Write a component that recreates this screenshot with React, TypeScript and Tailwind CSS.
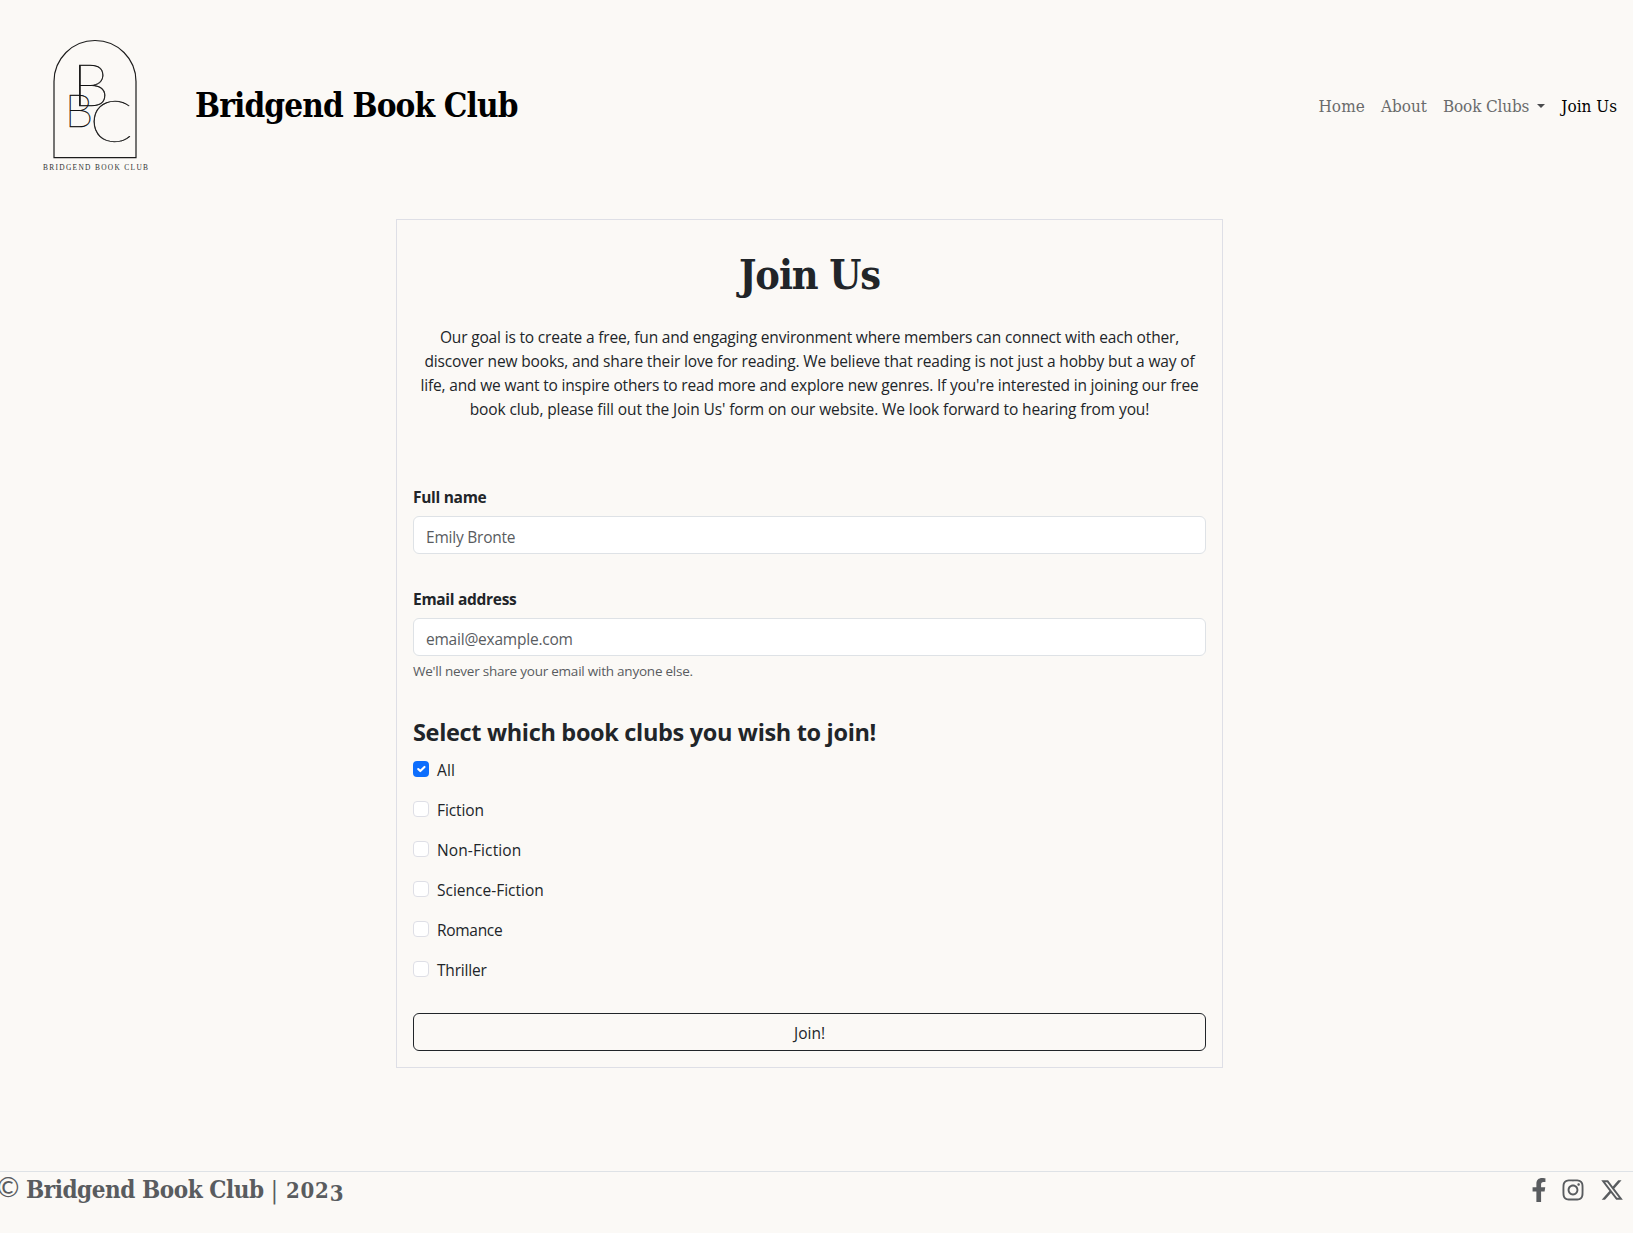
import { FaFacebookF, FaInstagram } from "react-icons/fa";
import { FaXTwitter } from "react-icons/fa6";

const serif = "font-['DejaVu_Serif_Condensed','DejaVu_Serif',serif]";

const clubs = [
  { name: "All", checked: true, gap: "tracking-[0.1px]" },
  { name: "Fiction", checked: false, gap: "tracking-[-0.1px]" },
  { name: "Non-Fiction", checked: false, gap: "tracking-[0.12px]" },
  { name: "Science-Fiction", checked: false, gap: "tracking-[0px]" },
  { name: "Romance", checked: false, gap: "tracking-[-0.3px]" },
  { name: "Thriller", checked: false, gap: "tracking-[-0.2px]" },
];

const goal = [
  { text: "Our goal is to create a free, fun and engaging environment where members can connect with each other,", gap: "tracking-[-0.17px]" },
  { text: "discover new books, and share their love for reading. We believe that reading is not just a hobby but a way of", gap: "tracking-[-0.135px]" },
  { text: "life, and we want to inspire others to read more and explore new genres. If you're interested in joining our free", gap: "tracking-[-0.175px]" },
  { text: "book club, please fill out the Join Us' form on our website. We look forward to hearing from you!", gap: "tracking-[-0.105px]" },
];

function Logo() {
  return (
    <svg width="130" height="155" viewBox="0 0 130 155" fill="none" aria-label="Bridgend Book Club logo">
      <path d="M24 132.6V56.5a41 41 0 0 1 82 0v76.1z" stroke="#1c1c1c" strokeWidth="1.2" />
      <g fill="#111" stroke="#111" fontFamily="Lato, sans-serif" fontWeight="100">
        <text transform="translate(42.4 80.6) scale(1.02 1)" fontSize="58" strokeWidth=".45">B</text>
        <text transform="translate(34.6 101.6) scale(1 1)" fontSize="46.5" strokeWidth=".4">B</text>
        <text transform="translate(59.5 117) scale(1.1 1)" fontSize="57.5" strokeWidth=".4">C</text>
      </g>
      <path d="M50 40.4v40" stroke="#111" strokeWidth="1.3" />
      <text x="13" y="145" fontSize="7.4" fill="#333" fontFamily="'Liberation Serif', serif" textLength="105">BRIDGEND BOOK CLUB</text>
    </svg>
  );
}

function Field({ label, type, placeholder }: { label: string; type: string; placeholder: string }) {
  return (
    <label className="block">
      <span className="mb-[7px] block h-[25px] pt-[1px] text-[15.5px] leading-6 font-bold tracking-[-0.3px]">{label}</span>
      <input
        type={type}
        placeholder={placeholder}
        className="block h-[38px] w-full rounded-md border border-[#dee2e6] bg-white px-3 pt-[3px] text-[15.5px] tracking-[-0.22px] placeholder:text-[#595c5f]"
      />
    </label>
  );
}

export default function App() {
  return (
    <div className="min-h-[1233px] overflow-hidden bg-[#fbf9f6] font-['Open_Sans',sans-serif] text-[#212529]">
      <header className="flex h-[212px] items-center justify-between pr-4 pl-[30px]">
        <div className="flex items-center pb-[7px]">
          <Logo />
          <h1 className={`${serif} ml-[35px] pt-[6px] text-[33px] leading-[40px] font-bold tracking-[-0.85px] whitespace-nowrap text-black`}>
            Bridgend Book Club
          </h1>
        </div>
        <nav className={`${serif} flex items-center gap-4 pb-[1px] text-[17px] leading-6 whitespace-nowrap text-[#6a6b6c]`}>
          <a className="tracking-[0.1px]">Home</a>
          <a className="tracking-[0px]">About</a>
          <a className="flex items-center gap-[8px] tracking-[-0.15px]">
            Book Clubs
            <span className="border-x-4 border-t-4 border-x-transparent border-t-[#4a4b4d]" />
          </a>
          <a className="text-black">Join Us</a>
        </nav>
      </header>

      <main className="mt-[7px] ml-[396px] h-[849px] w-[827px] border border-[#dedfe6] px-4">
        <h2 className={`${serif} mt-[31px] text-center text-[41px] leading-[48px] font-bold tracking-[-1.1px]`}>Join Us</h2>
        <p className="mt-[26px] text-center text-[15.5px] leading-6 whitespace-nowrap">
          {goal.map((l) => (
            <span key={l.text} className={`block ${l.gap}`}>{l.text}</span>
          ))}
        </p>
        <div className="mt-[63px]">
          <Field label="Full name" type="text" placeholder="Emily Bronte" />
        </div>
        <div className="mt-8">
          <Field label="Email address" type="email" placeholder="email@example.com" />
          <p className="mt-[5px] text-[13.5px] leading-[21px] tracking-[-0.23px] text-[#595c5f]">We'll never share your email with anyone else.</p>
        </div>
        <h3 className="mt-9 text-[23.5px] leading-[29px] font-bold tracking-[-0.33px]">Select which book clubs you wish to join!</h3>
        <div className="mt-[10px] flex flex-col gap-4">
          {clubs.map((c) => (
            <label key={c.name} className="flex h-6 gap-2 text-[15.5px] leading-6">
              <span
                className={
                  c.checked
                    ? "mt-1 flex size-4 items-center justify-center rounded bg-[#0d6efd]"
                    : "mt-1 size-4 rounded border border-[#dedfe6] bg-white"
                }
              >
                {c.checked && (
                  <svg width="14" height="14" viewBox="0 0 20 20" fill="none" stroke="#fff" strokeWidth="3" strokeLinecap="round" strokeLinejoin="round">
                    <path d="m6 10 3 3 6-6" />
                  </svg>
                )}
              </span>
              <span className={`pt-[1px] ${c.gap}`}>{c.name}</span>
            </label>
          ))}
        </div>
        <button className="mt-8 block h-[38px] w-full rounded-md border border-[#212529] pt-[2px] text-[15.5px] leading-6">Join!</button>
      </main>

      <footer className="mt-[103px] flex h-[62px] items-start justify-between border-t border-[#dee2e6] pr-[9px] text-[#595c5f]">
        <div className={`${serif} flex text-2xl leading-[36px] font-bold whitespace-nowrap`}>
          <span className="-ml-[3px] w-[29px] font-['Lato',sans-serif] text-[27px] leading-[29px] font-normal">©</span>
          <span className="tracking-[-0.45px]">Bridgend Book Club</span>
          <span className="ml-[7px] font-normal">|</span>
          <span className="ml-[8px] text-[22px] leading-[37px] tracking-[0.8px]">
            202<span className="relative top-[3px]">3</span>
          </span>
        </div>
        <div className="flex pt-[6px] text-2xl">
          <FaFacebookF />
          <FaInstagram className="ml-[10px]" />
          <FaXTwitter className="ml-[15px]" />
        </div>
      </footer>
    </div>
  );
}
